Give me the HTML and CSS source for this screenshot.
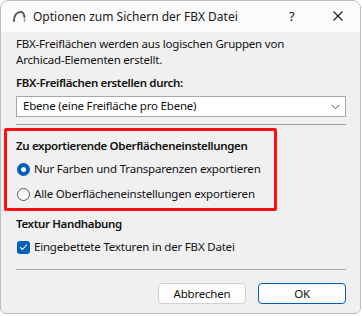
FILE: index.html
```html
<!DOCTYPE html>
<html lang="de">
<head>
<meta charset="utf-8">
<title>Optionen zum Sichern der FBX Datei</title>
<link rel="stylesheet" href="styles.css">
</head>
<body>
<div class="window">
  <div class="titlebar">
    <svg class="app-icon" width="14" height="14" viewBox="0 0 14 14">
      <path d="M2 12 C2 5 6 3 9 3 C11 3 12 5 12.5 8" fill="none" stroke="#5a5a5a" stroke-width="2" stroke-linecap="round"/>
      <path d="M12.5 10 L12.5 12" fill="none" stroke="#9a9a9a" stroke-width="1.6" stroke-linecap="round"/>
    </svg>
    <span class="title">Optionen zum Sichern der FBX Datei</span>
    <span class="help">?</span>
    <svg class="close" width="10" height="10" viewBox="0 0 10 10">
      <path d="M0.5 0.5 L9.5 9.5 M9.5 0.5 L0.5 9.5" stroke="#1a1a1a" stroke-width="1.1"/>
    </svg>
  </div>
  <div class="content">
    <p class="intro">FBX-Freiflächen werden aus logischen Gruppen von<br>Archicad-Elementen erstellt.</p>
    <div class="label first">FBX-Freiflächen erstellen durch:</div>
    <div class="select">
      <span>Ebene (eine Freifläche pro Ebene)</span>
      <svg class="chev" width="9" height="6" viewBox="0 0 9 6"><path d="M0.5 0.8 L4.5 4.8 L8.5 0.8" fill="none" stroke="#555" stroke-width="1"/></svg>
    </div>
    <div class="sep sep1"></div>
    <div class="highlight">
      <div class="label">Zu exportierende Oberflächeneinstellungen</div>
      <div class="option opt1"><span class="radio checked"></span><span>Nur Farben und Transparenzen exportieren</span></div>
      <div class="option opt2"><span class="radio"></span><span>Alle Oberflächeneinstellungen exportieren</span></div>
    </div>
    <div class="label tex">Textur Handhabung</div>
    <div class="option chk"><span class="checkbox"><svg width="9" height="8" viewBox="0 0 9 8"><path d="M1 4.2 L3.4 6.5 L8 1.5" fill="none" stroke="#fff" stroke-width="1.1"/></svg></span><span>Eingebettete Texturen in der FBX Datei</span></div>
    <div class="sep sep2"></div>
    <div class="buttons">
      <div class="btn">Abbrechen</div>
      <div class="btn primary">OK</div>
    </div>
  </div>
</div>
</body>
</html>
```
FILE: styles.css
```css
html, body {
  margin: 0;
  padding: 0;
  background: #ffffff;
}
body {
  font-family: "Noto Sans", "Open Sans", sans-serif;
  font-size: 11.5px;
  letter-spacing: -0.2px;
  color: #111111;
}
.window {
  width: 359px;
  height: 312px;
  border: 1px solid #bdbdbd;
  border-radius: 8px 8px 6px 6px;
  background: #f0f0f0;
  overflow: hidden;
  display: flex;
  flex-direction: column;
}
.titlebar {
  height: 31px;
  background: #fbfbfb;
  display: flex;
  align-items: center;
  padding-left: 11px;
  flex: none;
}
.app-icon { flex: none; margin-top: -2px; }
.title {
  margin-left: 7px;
  font-size: 12px;
  letter-spacing: 0;
  color: #1a1a1a;
  flex: 1;
  margin-top: -1px;
}
.help {
  width: 8px;
  margin-right: 36px;
  font-size: 13px;
  margin-top: -2px;
}
.close { margin-right: 17px; margin-top: -2px; }
.content {
  padding: 4px 14px 0 15px;
  line-height: 16px;
}
.intro { margin: 0; }
.label { font-weight: 600; letter-spacing: -0.35px; }
.label.first { margin-top: 7px; }
.select {
  margin-top: 5px;
  height: 19px;
  border: 1px solid #a8a8a8;
  background: #fff;
  display: flex;
  align-items: center;
  justify-content: space-between;
  padding: 0 5px 0 6px;
}
.select span { margin-top: -1px; }
.chev { margin-top: 1px; }
.sep { height: 1px; background: #a0a0a0; }
.sep1 { margin-top: 7px; }
.highlight {
  margin: 3px 0 0 -12px;
  width: 258px;
  border: 3px solid #ff1010;
  border-radius: 2px;
  padding: 7px 0 6px 9px;
}
.option { display: flex; align-items: center; }
.opt1 { margin-top: 7px; }
.opt2 { margin-top: 9px; }
.option > span:last-child { margin-left: 4px; }
.radio {
  width: 11px;
  height: 11px;
  border: 1px solid #5a5a5a;
  border-radius: 50%;
  background: #f8f8f8;
  flex: none;
  margin-left: 1px;
}
.radio.checked {
  width: 5px;
  height: 5px;
  border: 4px solid #005fb8;
  background: #fff;
}
.tex { margin-top: 5px; }
.chk { margin-top: 7px; }
.checkbox {
  width: 13px;
  height: 13px;
  border-radius: 3px;
  background: #005fb8;
  display: flex;
  align-items: center;
  justify-content: center;
  flex: none;
  margin-left: 1px;
}
.sep2 { margin-top: 14px; background: #aaaaaa; }
.buttons {
  margin-top: 13px;
  display: flex;
  justify-content: flex-end;
  gap: 12px;
}
.btn {
  width: 86px;
  height: 19px;
  border: 1px solid #d0d0d0;
  border-radius: 4px;
  background: #fdfdfd;
  display: flex;
  align-items: center;
  justify-content: center;
}
.btn.primary { border-color: #005fb8; }
```
